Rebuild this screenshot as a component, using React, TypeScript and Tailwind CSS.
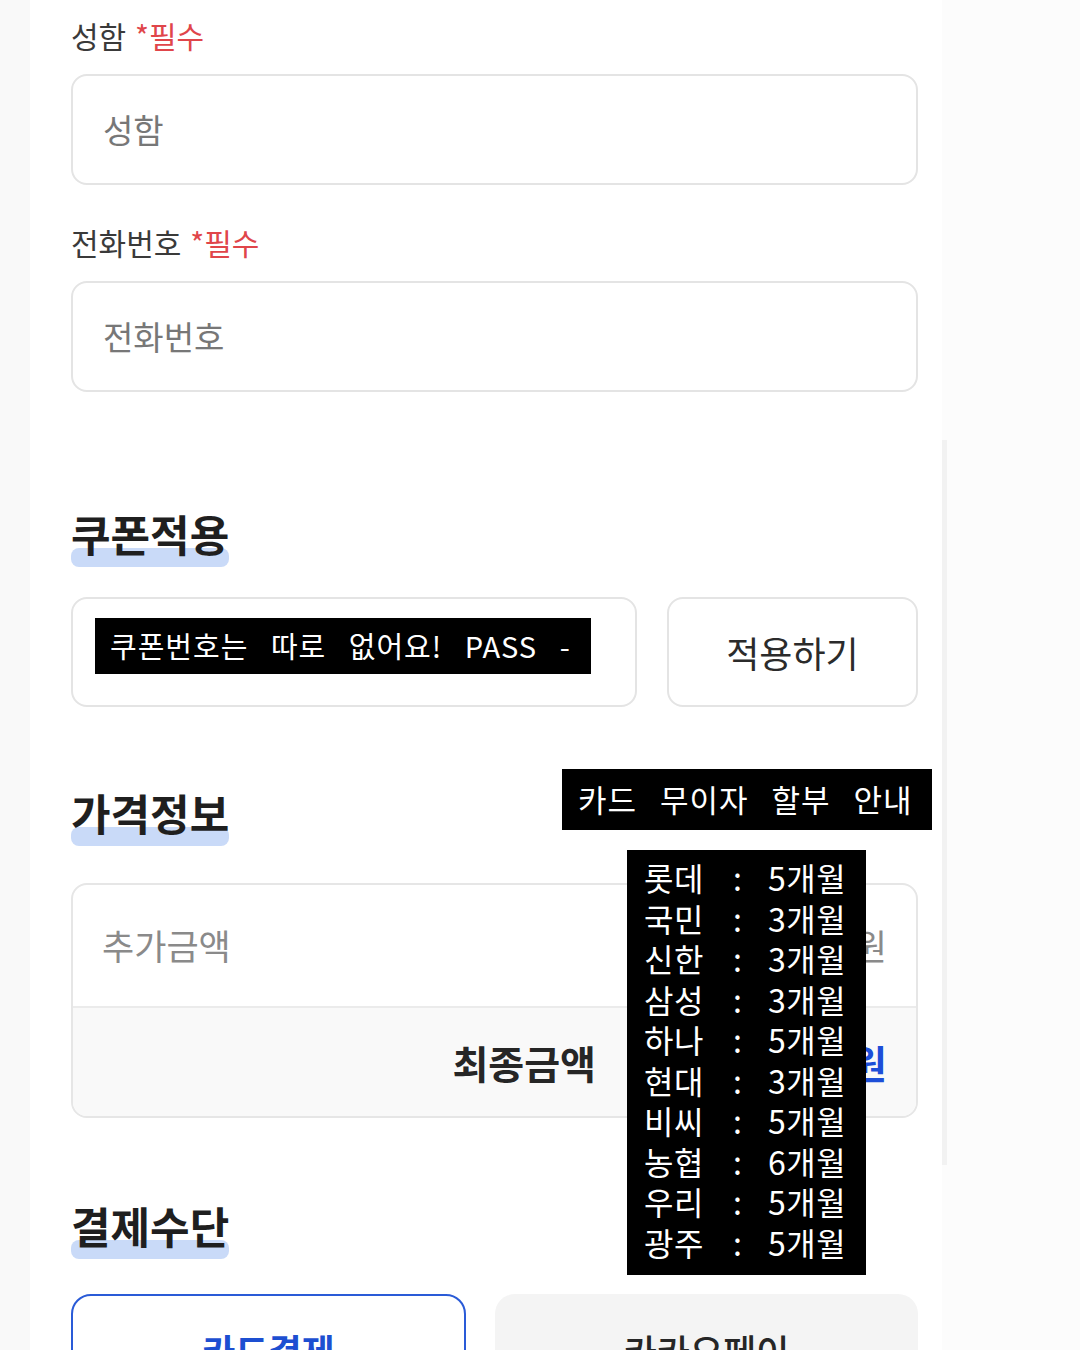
const font = { fontFamily: '"Noto Sans CJK KR", "Noto Sans", sans-serif' }

const installments = [
  ['롯데', '5개월'],
  ['국민', '3개월'],
  ['신한', '3개월'],
  ['삼성', '3개월'],
  ['하나', '5개월'],
  ['현대', '3개월'],
  ['비씨', '5개월'],
  ['농협', '6개월'],
  ['우리', '5개월'],
  ['광주', '5개월'],
]

function SectionTitle({ children }: { children: React.ReactNode }) {
  return (
    <h2 className="relative isolate inline-block h-[48px] text-[43px] font-bold leading-[48px] text-[#1f1f1f]">
      <span className="absolute left-0 right-0 top-[39px] -z-10 h-[19px] rounded-[8px] bg-[#c9daf8]" />
      {children}
    </h2>
  )
}

function Label({ text }: { text: string }) {
  return (
    <label className="block h-[36px] text-[30px] leading-[36px] text-[#3a3a3a]">
      {text} <span className="ml-[2px] text-[#e0454a]">*필수</span>
    </label>
  )
}

export default function App() {
  return (
    <div style={font} className="relative flex h-[1350px] w-[1080px] overflow-hidden bg-[#fcfcfc]">
      <div className="w-[30px] shrink-0 bg-[#f9f9f9]" />

      <main className="flex w-[912px] shrink-0 flex-col bg-white pl-[41px] pt-[17px]">
        <div className="w-[847px]">
          <Label text="성함" />
          <div className="mt-[21px] flex h-[111px] items-center rounded-[16px] border-2 border-[#e4e4e4] px-[30px] text-[33px] text-[#777]">
            성함
          </div>

          <div className="mt-[39px]">
            <Label text="전화번호" />
          </div>
          <div className="mt-[21px] flex h-[111px] items-center rounded-[16px] border-2 border-[#e4e4e4] px-[30px] text-[33px] text-[#777]">
            전화번호
          </div>

          <div className="mt-[117px]">
            <SectionTitle>쿠폰적용</SectionTitle>
          </div>
          <div className="mt-[40px] flex h-[110px] gap-[30px]">
            <div className="flex w-[566px] items-center rounded-[16px] border-2 border-[#e4e4e4] pl-[22px]">
              <div className="mb-[12px] flex h-[56px] w-[496px] items-center bg-black pl-[15px] text-[29px] tracking-[1px] text-white [word-spacing:15px]">
                쿠폰번호는 따로 없어요! PASS -
              </div>
            </div>
            <button className="flex flex-1 items-center justify-center rounded-[16px] border-2 border-[#e4e4e4] bg-white text-[36px] text-[#2b2b2b]">
              적용하기
            </button>
          </div>

          <div className="mt-[81px]">
            <SectionTitle>가격정보</SectionTitle>
          </div>
          <div className="mt-[47px] overflow-hidden rounded-[16px] border-2 border-[#e6e6e6]">
            <div className="flex h-[123px] items-center justify-between border-b-2 border-[#ebebeb] px-[29px] text-[35px] text-[#8a8a8a]">
              <span>추가금액</span>
              <span>원</span>
            </div>
            <div className="flex h-[108px] items-center justify-end bg-[#f9f9f9] pr-[29px] text-[39px] font-bold">
              <span className="mr-[31px] text-[#262626]">최종금액</span>
              <span className="w-[260px] text-right text-[#1d4ed8]">0원</span>
            </div>
          </div>

          <div className="mt-[83px]">
            <SectionTitle>결제수단</SectionTitle>
          </div>
          <div className="mt-[45px] flex h-[112px] gap-[29px]">
            <button className="flex w-[395px] items-center justify-center rounded-[20px] border-2 border-[#2a5bd7] bg-white text-[36px] font-bold text-[#1d4fd1]">
              카드결제
            </button>
            <button className="flex flex-1 items-center justify-center rounded-[20px] bg-[#f4f4f4] text-[36px] font-medium text-[#262626]">
              카카오페이
            </button>
          </div>
        </div>
      </main>

      <div className="mt-[440px] h-[725px] w-[5px] bg-[#f2f2f2]" />

      {/* caption overlays */}
      <div className="absolute left-[562px] top-[769px] flex h-[61px] w-[370px] items-center bg-black pl-[16px] text-[31px] tracking-[1px] text-white [word-spacing:15px]">
        카드 무이자 할부 안내
      </div>
      <div className="absolute left-[627px] top-[850px] w-[239px] bg-black pb-[13px] pl-[17px] pt-[7px] text-[32px] leading-[40.5px] tracking-[0.5px] text-white">
        {installments.map(([card, months]) => (
          <div key={card} className="flex">
            <span className="w-[89px]">{card}</span>
            <span className="w-[35px]">:</span>
            <span>{months}</span>
          </div>
        ))}
      </div>
    </div>
  )
}
